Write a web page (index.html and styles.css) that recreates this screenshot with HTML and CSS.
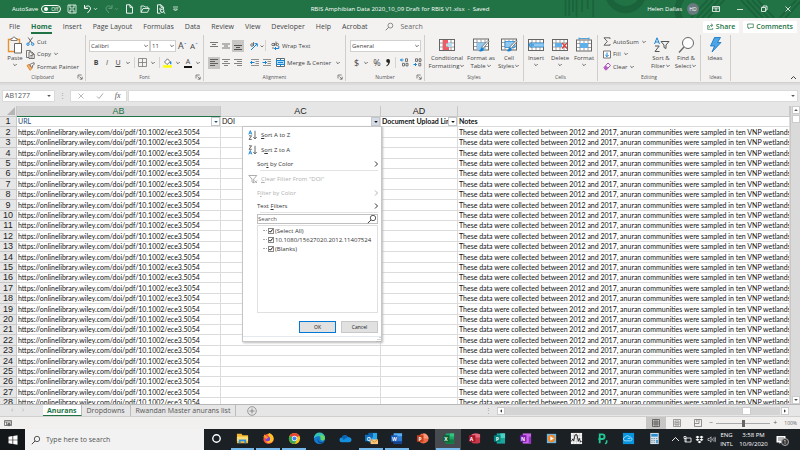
FILE: index.html
```html
<!DOCTYPE html>
<html lang="en">
<head>
<meta charset="utf-8">
<title>RBIS Amphibian Data - Excel</title>
<link rel="stylesheet" href="styles.css">
</head>
<body>
<svg class="defs" aria-hidden="true">
  <symbol id="chev" viewBox="0 0 6 6"><path d="M1.3 2l1.7 1.7L4.7 2" fill="none" stroke="currentColor" stroke-width=".8"/></symbol>
  <symbol id="tri" viewBox="0 0 6 6"><path d="M1.2 2h3.6L3 4z" fill="currentColor"/></symbol>
  <symbol id="launch" viewBox="0 0 6 6"><path d="M1 4.5V1h3.7M2.5 2.5l2.5 2.5M5.2 2.7v2.5H2.7" fill="none" stroke="#555" stroke-width=".7"/></symbol>
  <symbol id="lens" viewBox="0 0 10 10"><path d="M4.1 5.9L.8 9.2" stroke="currentColor" stroke-width=".9"/><circle cx="6" cy="4" r="2.7" fill="none" stroke="currentColor" stroke-width=".8"/></symbol>
  <symbol id="grid" viewBox="0 0 16 14"><rect x=".5" y="1.5" width="15" height="11" fill="#fff" stroke="#666"/><path d="M1 5h14M1 9h14M4 2v10M8 2v10M12 2v10" stroke="#777" stroke-width=".7"/></symbol>
  <symbol id="az" viewBox="0 0 10 10"><path d="M.8 4.5L2.3.6l1.5 3.9M1.3 3.2h2" stroke="#1684d4" fill="none" stroke-width=".9"/><path d="M1 5.8h2.6L1 9.4h2.8M7 .8v8M5.3 7L7 8.9 8.7 7" stroke="#444" fill="none" stroke-width=".8"/></symbol>
  <symbol id="za" viewBox="0 0 10 10"><path d="M.8 9.4L2.3 5.5l1.5 3.9M1.3 8.1h2" stroke="#1684d4" fill="none" stroke-width=".9"/><path d="M1 .8h2.6L1 4.3h2.8M7 .8v8M5.3 7L7 8.9 8.7 7" stroke="#444" fill="none" stroke-width=".8"/></symbol>
</svg>

<header class="titlebar">
  <svg class="pattern" viewBox="0 0 260 18" preserveAspectRatio="none" aria-hidden="true"><g stroke="#1b633b" fill="none"><path stroke-width="2" d="M6 0v16M10 0v16M14 0v12M18 0v17M24 0v12M30 0v9M36 0v17"/><path stroke-width="7" d="M52-4a20 20 0 0 0 38 0M132 22a18 18 0 0 1 0-24"/><path stroke-width="2" d="M142 18l18-18M148 18l18-18M154 18l18-18M160 18l18-18M196 0l18 18M202 0l18 18M208 0l18 18M214 0l18 18M238 18l18-18M244 18l18-18"/></g></svg>
  <div class="quick">
    <span>AutoSave</span>
    <button class="toggle" aria-label="AutoSave off"><i></i>Off</button>
    <button aria-label="Save"><svg width="10" height="10" viewBox="0 0 10 10"><path d="M1 1h8v8H2L1 8zM3 1v3h4V1M3 9V6h4v3" fill="none" stroke="#fff" stroke-width=".8"/></svg></button>
    <button aria-label="Undo"><svg width="15" height="10" viewBox="0 0 15 10"><path d="M1.5 1v3.4H5M1.7 4.2C4-.1 9 2.5 7 6L4.5 9" fill="none" stroke="#fff"/><path d="M11 4.2l1.5 1.5L14 4.2" fill="none" stroke="#fff" stroke-width=".8"/></svg></button>
    <button class="faded" aria-label="Redo"><svg width="15" height="10" viewBox="0 0 15 10"><path d="M8 1v3.4H4.5M7.8 4.2C5.5-.1.5 2.5 2.5 6L5 9" fill="none" stroke="#fff"/><path d="M11 4.2l1.5 1.5L14 4.2" fill="none" stroke="#fff" stroke-width=".8"/></svg></button>
    <button aria-label="New"><svg width="9" height="10" viewBox="0 0 9 10"><path d="M1.5.8H5L7.5 3.3V9.200h-6zM5 .8v2.500h2.500" fill="none" stroke="#fff" stroke-width=".9"/></svg></button>
    <button aria-label="Open"><svg width="10" height="10" viewBox="0 0 10 10"><path d="M1 8.300V2h3l1 1h3v1.500M1 8.300h6.500L9.300 4.500H3z" fill="none" stroke="#fff" stroke-width=".8"/></svg></button>
    <button aria-label="Preview"><svg width="10" height="10" viewBox="0 0 10 10"><path d="M4.500 9.200h-3V.8H5L7.500 3.300V5M5 .8v2.500h2.500" fill="none" stroke="#fff" stroke-width=".9"/><circle cx="6.200" cy="6.700" r="1.700" fill="none" stroke="#fff"/><path d="M7.500 8l1.800 1.700M3 5h2" stroke="#fff"/></svg></button>
    <button aria-label="Customize"><svg width="7" height="8" viewBox="0 0 7 8"><path d="M1 2h5M1.500 4l2 2 2-2z" fill="none" stroke="#fff" stroke-width=".7"/></svg></button>
  </div>
  <div class="doc">RBIS Amphibian Data 2020_10_09 Draft for RBIS V1.xlsx&nbsp; -&nbsp; Saved</div>
  <div class="account">
    <span>Helen Dallas</span><span class="avatar">HD</span>
    <button aria-label="Ribbon options"><svg width="8" height="8" viewBox="0 0 8 8"><path d="M.5 1.500h7v5h-7zM.5 3h7M4 6V3.500M3 4.500l1-1 1 1" fill="none" stroke="#fff" stroke-width=".8"/></svg></button>
    <button aria-label="Minimize"><svg width="8" height="8" viewBox="0 0 8 8"><path d="M1 4.500h6" stroke="#fff" stroke-width=".8"/></svg></button>
    <button aria-label="Restore"><svg width="8" height="8" viewBox="0 0 8 8"><path d="M1.500 2.500h4v4h-4zM3 2.500V1h4v4H5.500" fill="none" stroke="#fff" stroke-width=".8"/></svg></button>
    <button aria-label="Close"><svg width="8" height="8" viewBox="0 0 8 8"><path d="M1.500 1.500l5 5M6.500 1.500l-5 5" stroke="#fff" stroke-width=".8"/></svg></button>
  </div>
</header>

<nav class="tabs">
  <button>File</button><button class="active">Home</button><button>Insert</button><button>Page Layout</button><button>Formulas</button><button>Data</button><button>Review</button><button>View</button><button>Developer</button><button>Help</button><button>Acrobat</button>
  <button class="find"><svg width="9" height="9"><use href="#lens"/></svg>Search</button>
  <span class="grow"></span>
  <button class="pill"><svg width="7" height="7" viewBox="0 0 7 7"><path d="M2 2.500H.7v3.800h5V5M2 5c0-2 1.500-2.700 3-2.700M4 .8l2 1.500-2 1.500" fill="none" stroke="#217346" stroke-width=".7"/></svg>Share</button>
  <button class="pill"><svg width="7" height="7" viewBox="0 0 7 7"><path d="M.7 1h5.600v3.600H3L1.700 6V4.600h-1z" fill="none" stroke="#217346" stroke-width=".7"/></svg>Comments</button>
</nav>

<section class="ribbon">
  <div class="group clipboard">
    <div class="body">
      <button class="big"><svg width="16" height="18" viewBox="0 0 16 18"><path d="M8 15.500H1.500V3.500h11V7" fill="none" stroke="#e8912d" stroke-width="1.400"/><path d="M4 4.500v-2h1.500a1.500 1.500 0 0 1 3 0H10v2z" fill="#fff" stroke="#666" stroke-width=".8"/><path d="M7.500 7.500h7v9.500h-7z" fill="#fff" stroke="#666"/></svg>Paste<svg width="6" height="6"><use href="#chev"/></svg></button>
      <div class="stack">
        <button><svg width="9" height="9" viewBox="0 0 9 9"><path d="M2.200.5L6 6M6.500.5L2.800 6" stroke="#555" stroke-width=".9"/><circle cx="2" cy="7.200" r="1.200" fill="none" stroke="#1684d4"/><circle cx="6.700" cy="7.200" r="1.200" fill="none" stroke="#1684d4"/></svg>Cut</button>
        <button><svg width="9" height="9" viewBox="0 0 9 9"><path d="M3 7.500H.5v-7h3.800V2M3 2h3l2.300 2.300v4.200H3zM6 2v2.300h2.300M4.300 5.500h2.500M4.300 7h2.500" fill="none" stroke="#555" stroke-width=".8"/></svg>Copy <svg width="6" height="6"><use href="#chev"/></svg></button>
        <button><svg width="9" height="9" viewBox="0 0 9 9"><path d="M1 3.500l3 4.800 2.200-2-3.200-4z" fill="#f6b26b" stroke="#e07b18" stroke-width=".8"/><path d="M3.700 2.500L8 .6l.3 1.700-2 1.300.5 1.500-1 .6z" fill="#fff" stroke="#555" stroke-width=".8"/></svg>Format Painter</button>
      </div>
    </div>
    <h2>Clipboard</h2><svg class="launcher" width="6" height="6"><use href="#launch"/></svg>
  </div>

  <div class="group font">
    <div class="body lines">
      <div class="line"><select class="face" aria-label="Font"><option>Calibri</option></select><select class="size" aria-label="Font size"><option>11</option></select><button class="let a1">A<sup>ˆ</sup></button><button class="let a2">A<sup>ˇ</sup></button></div>
      <div class="line fmt"><button><b>B</b></button><button><em>I</em></button><button><u>U</u></button><svg width="6" height="6"><use href="#chev"/></svg><i class="bar"></i>
        <button aria-label="Borders"><svg width="9" height="9" viewBox="0 0 9 9"><path d="M.5.5h8v8h-8zM4.500.5v8M.5 4.500h8" fill="none" stroke="#777" stroke-width=".8"/></svg></button><svg width="6" height="6"><use href="#chev"/></svg><i class="bar"></i>
        <button aria-label="Fill color"><svg width="9" height="10" viewBox="0 0 9 10"><path d="M1.500 4L4.500.8l2.700 3L4 6.500z" fill="#fff" stroke="#555" stroke-width=".8"/><path d="M7.700 3.500v2.800" stroke="#1684d4" stroke-width="1.300"/><path d="M0 7.200h9v2.500H0z" fill="#ffff00"/></svg></button><svg width="6" height="6"><use href="#chev"/></svg>
        <button class="ink">A</button><svg width="6" height="6"><use href="#chev"/></svg></div>
    </div>
    <h2>Font</h2><svg class="launcher" width="6" height="6"><use href="#launch"/></svg>
  </div>

  <div class="group align">
    <div class="body lines">
      <div class="line"><button aria-label="Top"><svg width="12" height="12" viewBox="0 0 12 12"><path d="M2 2.500h8M4 4.500h4M2 6.500h8" stroke="#666" stroke-width=".9"/></svg></button><button aria-label="Middle"><svg width="12" height="12" viewBox="0 0 12 12"><path d="M2 4h8M4 6h4M2 8h8" stroke="#666" stroke-width=".9"/></svg></button><button class="on" aria-label="Bottom"><svg width="12" height="12" viewBox="0 0 12 12"><path d="M2 5.500h8M4 7.500h4M2 9.500h8" stroke="#444" stroke-width=".9"/></svg></button><i class="gap"></i>
        <button aria-label="Orientation"><svg width="16" height="10" viewBox="0 0 16 10"><path d="M2 9l6-6M5.500 2.700h2.800v2.800" stroke="#1684d4" fill="none"/><circle cx="3" cy="4" r="1.300" fill="none" stroke="#555" stroke-width=".8"/><path d="M4.500 1v4" stroke="#555" stroke-width=".8"/><path d="M11.500 4.500L13 6l1.500-1.500" fill="none" stroke="#555" stroke-width=".8"/></svg></button><i class="bar"></i>
        <button class="wide"><svg width="9" height="10" viewBox="0 0 9 10"><circle cx="2" cy="3.500" r="1.200" fill="none" stroke="#555" stroke-width=".8"/><path d="M3.500 2v3M5 .5v4.300M1 7h2" fill="none" stroke="#555" stroke-width=".8"/><circle cx="6.300" cy="3.500" r="1.200" fill="none" stroke="#555" stroke-width=".8"/><path d="M7.800 5v2.500H3.500M5 6L3.500 7.500 5 9" fill="none" stroke="#1684d4"/></svg>Wrap Text</button></div>
      <div class="line"><button class="on" aria-label="Left"><svg width="12" height="12" viewBox="0 0 12 12"><path d="M2 2.500h8M2 4.500h5M2 6.500h8M2 8.500h5" stroke="#555" stroke-width=".9"/></svg></button><button aria-label="Center"><svg width="12" height="12" viewBox="0 0 12 12"><path d="M2 2.500h8M4 4.500h4M2 6.500h8M4 8.500h4" stroke="#777" stroke-width=".9"/></svg></button><button aria-label="Right"><svg width="12" height="12" viewBox="0 0 12 12"><path d="M2 2.500h8M5 4.500h5M2 6.500h8M5 8.500h5" stroke="#777" stroke-width=".9"/></svg></button><i class="gap"></i>
        <button aria-label="Decrease indent"><svg width="12" height="10" viewBox="0 0 12 10"><path d="M2 1.500h8M6.500 3.500H10M6.500 5.500H10M2 7.500h8" stroke="#777" stroke-width=".8"/><path d="M5.500 4.500h-4M3 3L1.500 4.500 3 6" fill="none" stroke="#1684d4"/></svg></button><button aria-label="Increase indent"><svg width="12" height="10" viewBox="0 0 12 10"><path d="M2 1.500h8M6.500 3.500H10M6.500 5.500H10M2 7.500h8" stroke="#777" stroke-width=".8"/><path d="M1.500 4.500h4M4 3l1.500 1.500L4 6" fill="none" stroke="#1684d4"/></svg></button>
        <button class="wide merge"><svg width="9" height="9" viewBox="0 0 9 9"><path d="M.5.5h8v8h-8z" fill="#fff" stroke="#666"/><path d="M.5 2.500h8v4h-8z" fill="#b5dbf5" stroke="#1684d4"/><path d="M2 4.500h5M4.500.5v2M4.500 6.500v2" stroke="#1684d4"/></svg>Merge &amp; Center <svg width="6" height="6"><use href="#chev"/></svg></button></div>
    </div>
    <h2>Alignment</h2><svg class="launcher" width="6" height="6"><use href="#launch"/></svg>
  </div>

  <div class="group number">
    <div class="body lines">
      <div class="line"><select class="numfmt" aria-label="Number format"><option>General</option></select></div>
      <div class="line sym"><button>$</button><svg width="6" height="6"><use href="#chev"/></svg><button>%</button><button aria-label="Comma style"><svg width="6" height="9" viewBox="0 0 6 9"><path d="M1.300 7.500c1.500-.7 2-1.700 2-2.700A1.900 1.900 0 1 1 5 2.900C5 5.500 3.600 7.500 1.600 8.200z" fill="#222"/></svg></button><i class="bar"></i>
        <button aria-label="Increase decimal"><svg width="9" height="9" viewBox="0 0 9 9"><path d="M3.500 2H.5M2 .5L.5 2 2 3.500" fill="none" stroke="#1684d4"/><path d="M5.500.8h2v2.600h-2zM2.500 5.300h2v2.600h-2zM6 5.300h2v2.600H6z" fill="none" stroke="#555" stroke-width=".8"/></svg></button>
        <button aria-label="Decrease decimal"><svg width="9" height="9" viewBox="0 0 9 9"><path d="M.5 6.500h3M2 5l1.500 1.500L2 8" fill="none" stroke="#1684d4"/><path d="M2.500.8h2v2.600h-2zM6 .8h2v2.600H6zM5.800 5.300h2v2.600h-2z" fill="none" stroke="#555" stroke-width=".8"/></svg></button></div>
    </div>
    <h2>Number</h2><svg class="launcher" width="6" height="6"><use href="#launch"/></svg>
  </div>

  <div class="group styles">
    <div class="body">
      <button class="big w38"><svg width="16" height="14" viewBox="0 0 16 14"><use href="#grid"/><path d="M4 2h5v3H4zM4 5h3v4H4zM4 9h6v3H4z" fill="#f15b64"/><path d="M9 5h4v4H9z" fill="#b5dbf5"/></svg>Conditional<span>Formatting<svg width="6" height="6"><use href="#chev"/></svg></span></button>
      <button class="big w30"><svg width="17" height="15" viewBox="0 0 17 15"><use href="#grid" width="16" height="14"/><path d="M4 5h8v7H4z" fill="#8fc8f0"/><path d="M16 4l-6 7-1.500-1.200L15 3z" fill="#fff" stroke="#555" stroke-width=".7"/><path d="M9.500 10c-2 0-1.500 2.500-4 3.500 3 1 5.500 0 5.300-2.300z" fill="#1684d4"/></svg>Format as<span>Table<svg width="6" height="6"><use href="#chev"/></svg></span></button>
      <button class="big w26"><svg width="17" height="15" viewBox="0 0 17 15"><use href="#grid" width="16" height="14"/><path d="M4 4h10v6H4z" fill="#8fc8f0" stroke="#1684d4" stroke-width=".7"/><path d="M16 4l-6 7-1.500-1.200L15 3z" fill="#fff" stroke="#555" stroke-width=".7"/><path d="M9.500 10c-2 0-1.500 2.500-4 3.500 3 1 5.500 0 5.300-2.300z" fill="#1684d4"/></svg>Cell<span>Styles<svg width="6" height="6"><use href="#chev"/></svg></span></button>
    </div>
    <h2>Styles</h2>
  </div>

  <div class="group cells">
    <div class="body">
      <button class="big w22"><svg width="16" height="14" viewBox="0 0 16 14"><use href="#grid"/><path d="M3 5h13v4H3z" fill="#8fc8f0" stroke="#1684d4" stroke-width=".6"/><path d="M6 7H.8M3 4.500L.7 7 3 9.500" fill="none" stroke="#1684d4"/></svg>Insert<svg width="6" height="6"><use href="#chev"/></svg></button>
      <button class="big w22"><svg width="16" height="14" viewBox="0 0 16 14"><use href="#grid"/><path d="M3 5h7v4H3z" fill="#5eb0ea"/><path d="M10 5l5 5.500M15 5l-5 5.500" stroke="#e03c3c" stroke-width="1.200"/></svg>Delete<svg width="6" height="6"><use href="#chev"/></svg></button>
      <button class="big w22"><svg width="16" height="15" viewBox="0 0 16 15"><use href="#grid" y="1" width="16" height="14"/><path d="M4 5.500h8v5H4z" fill="#5eb0ea"/><path d="M3 1h10M3 0v2M13 0v2" stroke="#1684d4" stroke-width=".7"/></svg>Format<svg width="6" height="6"><use href="#chev"/></svg></button>
    </div>
    <h2>Cells</h2>
  </div>

  <div class="group editing">
    <div class="body">
      <div class="stack">
        <button><svg width="8" height="9" viewBox="0 0 8 9"><path d="M7 2V.8H1L4.300 4.500 1 8.200h6V7" fill="none" stroke="#555" stroke-width=".9"/></svg>AutoSum <svg width="6" height="6"><use href="#chev"/></svg></button>
        <button><svg width="8" height="9" viewBox="0 0 8 9"><path d="M.5 1h7v7h-7z" fill="#fff" stroke="#555" stroke-width=".8"/><path d="M4 2.500v4M2.300 5L4 6.700 5.700 5" fill="none" stroke="#1684d4"/></svg>Fill<svg width="6" height="6"><use href="#chev"/></svg></button>
        <button><svg width="8" height="9" viewBox="0 0 8 9"><path d="M1 5.500L5 1l2.500 2.300-4 4.500H2.300z" fill="#fff" stroke="#a347b5"/><path d="M1 5.500l1.800-2 2.500 2.300-1.800 2H2.300z" fill="#b75cc8"/></svg>Clear<svg width="6" height="6"><use href="#chev"/></svg></button>
      </div>
      <button class="big w26"><svg width="17" height="16" viewBox="0 0 17 16"><path d="M1.500 7L4 .8 6.500 7M2.400 5h3.200" fill="none" stroke="#1684d4"/><path d="M2 9h4.200L2 14.500h4.500M8 4.500h8l-3 3.500v3.500l-2-1V8z" fill="none" stroke="#555"/></svg>Sort &amp;<span>Filter<svg width="6" height="6"><use href="#chev"/></svg></span></button>
      <button class="big w22"><svg width="17" height="17" viewBox="0 0 17 17"><circle cx="10" cy="6.500" r="5.500" fill="#fff" stroke="#666"/><path d="M6 10.500L1 16" stroke="#666" stroke-width="1.300"/></svg>Find &amp;<span>Select<svg width="6" height="6"><use href="#chev"/></svg></span></button>
    </div>
    <h2>Editing</h2>
  </div>

  <div class="group ideas">
    <div class="body"><button class="big w26"><svg width="13" height="17" viewBox="0 0 13 17"><path d="M5.500 1h6l-3 5H12L3 15.500l2.500-6H1.500z" fill="#4ba6e8" stroke="#1270bd" stroke-width=".8"/></svg>Ideas</button></div>
    <h2>Ideas</h2>
  </div>
  <span class="grow"></span>
  <button class="collapse" aria-label="Collapse ribbon"><svg width="7" height="6" viewBox="0 0 7 6"><path d="M1 4l2.500-2.500L6 4" fill="none" stroke="#444"/></svg></button>
</section>

<section class="formula">
  <div class="namebox"><input value="AB1277" aria-label="Name box"><svg width="6" height="6"><use href="#tri"/></svg></div>
  <span class="dots">⋮</span>
  <div class="fx"><svg width="8" height="8" viewBox="0 0 8 8"><path d="M1.500 1.500l5 5M6.500 1.500l-5 5" stroke="#aaa" stroke-width=".8"/></svg><svg width="8" height="8" viewBox="0 0 8 8"><path d="M1 4.500l2 2 4-5" fill="none" stroke="#aaa"/></svg><em>fx</em></div>
  <div class="entry"><input aria-label="Formula bar"><svg width="6" height="6"><use href="#tri"/></svg></div>
</section>

<main class="sheet">
  <div class="viewport">
    <table>
      <colgroup><col class="c0"><col class="c1"><col class="c2"><col class="c3"><col></colgroup>
      <thead>
        <tr class="letters"><th><svg width="8" height="8" viewBox="0 0 8 8"><path d="M8 0v8H0z" fill="#b5b5b5"/></svg></th><th class="sel">AB</th><th>AC</th><th>AD</th><th></th></tr>
      </thead>
      <tbody id="rows">
        <tr><th>1</th><td class="url"><div>URL<button aria-label="Filter URL"><svg width="6" height="6"><use href="#tri"/></svg></button></div></td><td><div>DOI<button class="open" aria-label="Filter DOI"><svg width="6" height="6"><use href="#tri"/></svg></button></div></td><td><div><b>Document Upload Link</b><button aria-label="Filter links"><svg width="6" height="6"><use href="#tri"/></svg></button></div></td><td><b>Notes</b></td></tr>
      </tbody>
    </table>
  </div>
  <div class="vscroll"><i class="arrow"><svg width="6" height="6" viewBox="0 0 6 6"><path d="M1.200 4h3.600L3 2z" fill="#555"/></svg></i><i class="thumb"></i><span class="grow"></span><i class="arrow"><svg width="6" height="6"><use href="#tri"/></svg></i></div>

  <div class="menu" role="menu">
    <button class="mi tall"><svg width="10" height="10"><use href="#az"/></svg><span><u>S</u>ort A to Z</span></button>
    <button class="mi tall"><svg width="10" height="10"><use href="#za"/></svg><span>S<u>o</u>rt Z to A</span></button>
    <button class="mi plain"><span>Sor<u>t</u> by Color</span><svg width="6" height="6" viewBox="0 0 6 6"><path d="M2 .5L4.500 3 2 5.500" fill="none" stroke="currentColor"/></svg></button>
    <hr>
    <button class="mi tall" disabled><svg width="10" height="10" viewBox="0 0 10 10"><path d="M.8 1.500h8L5.700 5v4L4 8V5zM6.500 6.500l2.500 2.500M9 6.500L6.500 9" fill="none" stroke="#999" stroke-width=".8"/></svg><span><u>C</u>lear Filter From "DOI"</span></button>
    <button class="mi plain" disabled><span>F<u>i</u>lter by Color</span><svg width="6" height="6" viewBox="0 0 6 6"><path d="M2 .5L4.500 3 2 5.500" fill="none" stroke="currentColor"/></svg></button>
    <button class="mi plain"><span>Text <u>F</u>ilters</span><svg width="6" height="6" viewBox="0 0 6 6"><path d="M2 .5L4.500 3 2 5.500" fill="none" stroke="currentColor"/></svg></button>
    <hr>
    <div class="msearch"><input placeholder="Search" aria-label="Search values"><svg width="10" height="10"><use href="#lens"/></svg></div>
    <div class="values">
      <label><input type="checkbox" checked>(Select All)</label>
      <label><input type="checkbox" checked>10.1080/15627020.2012.11407524</label>
      <label><input type="checkbox" checked>(Blanks)</label>
    </div>
    <div class="actions"><button class="ok">OK</button><button>Cancel</button></div>
    <div class="grip"><svg width="5" height="5" viewBox="0 0 5 5"><path d="M4 0v1M2 2v1M4 2v1M0 4v1M2 4v1M4 4v1" stroke="#aaa"/></svg></div>
  </div>
</main>

<footer class="sheets">
  <span class="nav"><i>‹</i><i>›</i></span>
  <button class="active">Anurans</button><button>Dropdowns</button><button>Rwandan Master anurans list</button>
  <button class="add" aria-label="New sheet"><svg width="10" height="10" viewBox="0 0 10 10"><circle cx="5" cy="5" r="4.300" fill="none" stroke="#777" stroke-width=".7"/><path d="M5 2.500v5M2.500 5h5" stroke="#777" stroke-width=".8"/></svg></button>
  <span class="grow"></span>
  <div class="hscroll"><span class="dots">⋮</span><i class="arrow"><svg width="6" height="6" viewBox="0 0 6 6"><path d="M4 1.200v3.600L2 3z" fill="#444"/></svg></i><span class="track"><i class="thumb"></i></span><i class="arrow"><svg width="6" height="6" viewBox="0 0 6 6"><path d="M2 1.200v3.600L4 3z" fill="#444"/></svg></i></div>
</footer>

<div class="status">
  <svg width="8" height="7" viewBox="0 0 8 7"><path d="M.5.500h7v5h-7zM.5 2h7M2.500 2v3.500" fill="none" stroke="#666" stroke-width=".8"/><circle cx="5" cy="4.500" r="1.700" fill="#666"/></svg>
  <span class="grow"></span>
  <button class="on" aria-label="Normal view"><svg width="8" height="8" viewBox="0 0 8 8"><path d="M.5.500h7v7h-7zM.5 3h7M.5 5h7M3 .5v7M5 .5v7" fill="none" stroke="#555" stroke-width=".8"/></svg></button>
  <button aria-label="Page layout"><svg width="8" height="8" viewBox="0 0 8 8"><path d="M.5.500h7v7h-7zM2 2h4v4H2zM2.500 3.500h3M2.500 5h3" fill="none" stroke="#777" stroke-width=".7"/></svg></button>
  <button aria-label="Page break"><svg width="8" height="8" viewBox="0 0 8 8"><path d="M.5.500h7v7h-7zM.5 4.500h4.500V.5M2.800.5v2.500" fill="none" stroke="#777" stroke-width=".8"/></svg></button>
  <span>−</span><input type="range" aria-label="Zoom" value="50"><span>+</span><span class="pct">100%</span>
</div>

<footer class="taskbar">
  <button class="start" aria-label="Start"><svg width="10" height="10" viewBox="0 0 10 10"><path d="M.5 1.700L4.500 1v3.700h-4zM5.200.9L9.500.2v4.500H5.200zM.5 5.300h4V9l-4-.7zM5.200 5.300h4.300v4.500l-4.300-.7z" fill="#fff"/></svg></button>
  <label class="wsearch"><svg width="10" height="10"><use href="#lens"/></svg><input placeholder="Type here to search"></label>
  <div class="apps">
    <button aria-label="Cortana"><svg viewBox="0 0 14 14"><circle cx="7" cy="7" r="4" fill="none" stroke="#fff" stroke-width="1.500"/></svg></button>
    <button class="run" aria-label="Explorer"><svg viewBox="0 0 14 14"><path d="M1 2h5l1 1.500h6V12H1z" fill="#f5b82e"/><path d="M1 5h12v5H1z" fill="#ffdc73"/><path d="M3 12V8h8v4H9v-2H5v2z" fill="#2e8ee0"/></svg></button>
    <button class="run" aria-label="Firefox"><svg viewBox="0 0 14 14"><circle cx="7" cy="7.500" r="5.500" fill="#ff4f3b"/><path d="M6 3l2-2c4 2 5.500 5 4 8.500-2 3-6 3-8 1 5 0 6-4 2-7.500z" fill="#ffc229"/><circle cx="6.300" cy="7.500" r="2.500" fill="#7a43d6"/><path d="M1.500 5L3 2.500 5 5l2 .5-2 2z" fill="#ff9a2a"/></svg></button>
    <button class="run" aria-label="Chrome"><svg viewBox="0 0 14 14"><circle cx="7" cy="7" r="6" fill="#fbc116"/><path d="M7 7L1.800 4A6 6 0 0 1 12.200 4z" fill="#ea4335"/><path d="M7 7L1.800 4A6 6 0 0 0 7 13l2.600-4.500z" fill="#34a853"/><circle cx="7" cy="7" r="2.900" fill="#fff"/><circle cx="7" cy="7" r="2.200" fill="#4285f4"/></svg></button>
    <button aria-label="Edge"><svg viewBox="0 0 14 14"><circle cx="7" cy="7" r="6" fill="#1479cc"/><path d="M1 7a6 6 0 0 1 12-1c.5 3-4 4-5 2 1-2-1-4-3-3.500S1.500 6 1 7z" fill="#35c1b5"/><path d="M8 3c3 0 5 2 5 4s-3 2.500-4.500 1.500z" fill="#63d663"/><path d="M6 6c-1.500 3 1 6 5.500 4.500L9 12.500C5 12 4 8 6 6z" fill="#0b4a92"/></svg></button>
    <button aria-label="OneDrive"><svg viewBox="0 0 14 14"><path d="M3 11a2.500 2.500 0 0 1 0-5c1-3 5-3.500 6.500-.7 2.500 0 4 1.300 4 3S12.500 11 11 11z" fill="#1490df"/><path d="M3 6c1-3 5-3.500 6.500-.7L5 8.500z" fill="#0a64b5"/></svg></button>
    <button class="run" aria-label="Outlook"><svg viewBox="0 0 14 14"><path d="M4 1h9v10H4z" fill="#28a8ea"/><path d="M4 1h4.500v5H4z" fill="#0f5fae"/><path d="M0 3h7v7H0z" fill="#0f6cbd"/><path d="M6 8h8v5H6z" fill="#f9c77a"/><path d="M6 8l4 3 4-3" fill="none" stroke="#c8751a" stroke-width=".7"/></svg><b>O</b></button>
    <button class="run" aria-label="Word"><svg viewBox="0 0 14 14"><path d="M4 1.500h9v11H4z" fill="#2b7cd3"/><path d="M4 1.500h9v3H4z" fill="#5ab0ef"/><path d="M4 10h9v2.500H4z" fill="#153f88"/><path d="M1 3.500h7v7H1z" fill="#185abd"/></svg><b>W</b></button>
    <button aria-label="PowerPoint"><svg viewBox="0 0 14 14"><circle cx="8" cy="7" r="5.500" fill="#ed6c47"/><path d="M8 1.500A5.500 5.500 0 0 1 13.500 7H8z" fill="#ff9b78"/><path d="M1 3.500h7v7H1z" fill="#c43e1c"/></svg><b>P</b></button>
    <button class="run current" aria-label="Excel"><svg viewBox="0 0 14 14"><path d="M4 1.500h9v11H4z" fill="#21a366"/><path d="M8.500 1.500H13V5H8.500z" fill="#33c481"/><path d="M4 8h9v4.500H4z" fill="#107c41"/><path d="M1 3.500h7v7H1z" fill="#0c6337"/></svg><b>X</b></button>
    <button aria-label="Access"><svg viewBox="0 0 14 14"><path d="M4 2.500q4.500-2 9 0v9q-4.500 2-9 0z" fill="#c8384b"/><path d="M4 2.500q4.500-2 9 0V6H4z" fill="#e5697a"/><path d="M1 3.500h7v7H1z" fill="#a4172b"/></svg><b>A</b></button>
    <button aria-label="Publisher"><svg viewBox="0 0 14 14"><path d="M4 1.500h9v11H4z" fill="#1aa69c"/><path d="M8 1.500h5v5H8z" fill="#4cd0c4"/><path d="M1 3.500h7v7H1z" fill="#037e77"/></svg><b>P</b></button>
    <button aria-label="OneNote"><svg viewBox="0 0 14 14"><path d="M4 1.500h9v11H4z" fill="#ca64ea"/><path d="M10.500 5H13v7.500h-2.500z" fill="#9332bf"/><path d="M1 3.500h7v7H1z" fill="#7719aa"/></svg><b>N</b></button>
    <button aria-label="Media player"><svg viewBox="0 0 14 14"><path d="M2 2h10v10H2z" fill="#70b8df"/><circle cx="7" cy="7" r="4" fill="#f18825"/><path d="M5.700 4.700L9.500 7 5.700 9.300z" fill="#fff"/></svg></button>
    <button aria-label="Signal"><svg viewBox="0 0 14 14"><path d="M1 1h12v12H1z" fill="#f5f5f5"/><path d="M1 4h12M1 7h12M1 10h12M4 1v12M7 1v12M10 1v12" stroke="#bbb" stroke-width=".5"/><path d="M1.500 10L3 7.500l1 2L5.500 3h2L9 10l1-3 1.500 4 1-1" fill="none" stroke="#222"/></svg></button>
    <button aria-label="Notes"><svg viewBox="0 0 14 14"><path d="M4 12V2.500h2.700a2.500 2.500 0 0 1 0 5H2.500" fill="none" stroke="#20c997" stroke-width="2"/><path d="M11.500 9v2L10 13" stroke="#20c997" stroke-width="1.700" fill="none"/></svg></button>
    <button aria-label="Cloud"><svg viewBox="0 0 14 14"><path d="M1 1h12v12H1z" fill="#0795df"/><path d="M3.500 9.500a2 2 0 0 1 0-4c1-2 4-2 4.500 0 3-.5 4 4 1 4zM6 7h3" fill="none" stroke="#a9e2ff" stroke-width=".9"/></svg></button>
    <button aria-label="Calculator"><svg viewBox="0 0 14 14"><path d="M2.500 1h9v12h-9z" fill="#d9e6ef"/><path d="M3.500 2h7v3h-7z" fill="#298bd0"/><path d="M3.500 7h7M3.500 9h7M3.500 11h7" stroke="#6a8aa0" stroke-dasharray="1.500 1"/><path d="M9 8.500h1.500V12H9z" fill="#298bd0"/></svg></button>
  </div>
  <div class="tray">
    <svg width="9" height="9" viewBox="0 0 9 9"><path d="M1 6l3.500-3.500L8 6" fill="none" stroke="#fff" stroke-width=".9"/></svg>
    <svg width="9" height="9" viewBox="0 0 9 9"><path d="M3 3h5v4H3zM1 1.500v2h2v-2zM2 3.500V7h1" fill="none" stroke="#fff" stroke-width=".8"/></svg>
    <svg width="9" height="9" viewBox="0 0 9 9"><path d="M2.500.8l2 1.300-2 1.300-2-1.300zM6.500.8l2 1.300-2 1.300-2-1.300zM2.500 3.400l2 1.300-2 1.300-2-1.300zM6.500 3.400l2 1.300-2 1.300-2-1.300zM4.500 5.800l2 1.200-2 1.300-2-1.300z" fill="#fff"/></svg>
    <svg width="9" height="9" viewBox="0 0 9 9"><path d="M1 3.500h1.300L4 1.800v5.400L2.300 5.500H1zM5.300 3.500v2M6.700 2.500q1 2 0 4M8 1.800q1.200 2.700 0 5.400" fill="none" stroke="#ddd" stroke-width=".7"/></svg>
    <span class="lang">ENG<br>INTL</span><span class="clock">3:58 PM<br>10/9/2020</span>
    <button class="notif" aria-label="Notifications"><svg width="10" height="10" viewBox="0 0 10 10"><path d="M.5 1h9v6.500H5L3.500 9V7.500h-3z" fill="#fff"/><path d="M2 3h6M2 5h6" stroke="#333" stroke-width=".7"/></svg><i>1</i></button>
  </div>
</footer>
<script src="rows.js"></script>
</body>
</html>
```
FILE: rows.js
```js
const url = "https://onlinelibrary.wiley.com/doi/pdf/10.1002/ece3.5054";
const note = "These data were collected between 2012 and 2017, anuran communities were sampled in ten VNP wetlands located";
const body = document.getElementById("rows");
for (let n = 2; n <= 28; n++) {
  const row = body.insertRow();
  const head = document.createElement("th");
  head.textContent = n;
  row.append(head);
  for (const text of [url, "", "", note]) row.insertCell().textContent = text;
}
```
FILE: styles.css
```css
* { box-sizing: border-box; }
body { margin: 0; height: 100vh; display: flex; flex-direction: column; overflow: hidden; background: #e6e6e6; color: #444; font: 7px/10px "Open Sans", "Noto Sans", sans-serif; }
button, input, select { font: inherit; color: inherit; border: 0; background: none; padding: 0; margin: 0; min-width: 0; outline: 0; }
button { display: inline-flex; align-items: center; white-space: nowrap; }
i { font-style: normal; }
svg { flex: none; display: block; }
.defs { position: absolute; width: 0; height: 0; }
.grow { flex: 1; }

.titlebar { position: relative; flex: none; height: 18px; display: grid; grid-template-columns: 1fr auto 1fr; align-items: center; background: #217346; color: #fff; font-size: 6px; }
.pattern { position: absolute; right: 0; top: 0; width: 240px; height: 18px; }
.quick { display: flex; align-items: center; gap: 6px; padding-left: 12px; }
.quick > span { margin-right: -3px; }
.toggle { width: 20px; height: 8px; border: 1px solid #fff; border-radius: 4px; font-size: 5px; gap: 3px; padding-left: 2px; line-height: 6px; }
.toggle i { width: 4px; height: 4px; border-radius: 2px; background: #fff; }
.faded { opacity: .3; }
.account { position: relative; display: flex; align-items: center; justify-content: flex-end; gap: 16px; padding-right: 8px; }
.account > span:first-child { margin-right: -11px; }
.avatar { width: 12px; height: 12px; border-radius: 6px; background: #69797e; font-size: 5px; line-height: 12px; text-align: center; margin-right: -3px; }

.tabs { flex: none; height: 17px; display: flex; align-items: center; gap: 11px; padding: 0 3px 0 9px; background: #f3f2f1; }
.tabs button { height: 15px; }
.tabs .active { font-weight: 700; color: #217346; border-bottom: 2px solid #217346; padding-top: 2px; }
.tabs .find { gap: 7px; margin-left: 6px; color: #666; }
.tabs .pill { height: 12px; background: #fff; border-radius: 1px; color: #217346; font-weight: 600; gap: 2px; padding: 0 4px; margin-left: -7px; }

.ribbon { flex: none; height: 48px; display: flex; background: #f3f2f1; border-bottom: 1px solid #d0d0d0; font-size: 6px; line-height: 8px; }
.group { position: relative; height: 46px; display: flex; flex-direction: column; border-right: 1px solid #d0cecc; }
.group h2 { margin: 0; text-align: center; font: 5px/8px "Open Sans", sans-serif; color: #555; }
.body { display: flex; height: 38px; padding-left: 4px; }
.launcher { position: absolute; right: 2px; bottom: 1px; }
.big { flex-direction: column; width: 22px; line-height: 8px; padding-top: 1px; }
.big > svg:first-child { height: 18px; }
.big span { display: flex; align-items: center; }
.w38 { width: 38px; } .w30 { width: 30px; } .w26 { width: 26px; } .w22 { width: 22px; }
.stack { display: flex; flex-direction: column; align-items: flex-start; justify-content: space-between; padding: 1px 0; }
.stack button { gap: 2px; height: 11px; }
.lines { flex-direction: column; gap: 4px; padding-top: 4px; }
.line { display: flex; align-items: center; height: 13px; }
.bar { width: 1px; height: 11px; background: #d5d3d1; }
.gap { width: 5px; }
.on { background: #c8c6c4; }
select { appearance: none; height: 12px; background: #fff url("data:image/svg+xml,%3Csvg xmlns='http://www.w3.org/2000/svg' viewBox='0 0 6 6'%3E%3Cpath d='M1.300 2l1.700 1.700L4.700 2' fill='none' stroke='%23444' stroke-width='.8'/%3E%3C/svg%3E") no-repeat right 0 center / 6px 6px; border: 1px solid #d2d0ce; padding-left: 1px; }
.clipboard { width: 86px; } .font { width: 118px; } .align { width: 142px; } .number { width: 79px; }
.styles { width: 99px; } .cells { width: 74px; } .editing { width: 103px; } .ideas { width: 30px; }
.face { width: 61px; } .size { width: 26px; }
.let { font-size: 9px; width: 12px; padding-left: 2px; }
.let sup { color: #1684d4; font-size: 7px; line-height: 1px; }
.a2 { font-size: 8px; }
.font .body { padding-left: 3px; }
.fmt { gap: 3px; padding-left: 3px; font-size: 7px; }
.fmt button { min-width: 8px; justify-content: center; }
.ink { border-bottom: 2px solid #111; line-height: 8px; }
.align .on, .align .line > button { height: 12px; }
.wide { gap: 2px; padding-left: 5px; }
.merge { padding-left: 3px; }
.merge > svg:last-child { margin-left: 2px; }
.number .body { padding-left: 4px; }
.numfmt { width: 71px; }
.sym { gap: 4px; padding-left: 4px; font-size: 9px; }
.styles .body { padding-left: 3px; gap: 0; }
.cells .body { padding-left: 0; }
.cells .w22 { width: 24px; }
.ideas .body { padding-left: 1px; }
.editing .body { padding-left: 5px; gap: 1px; }
.editing .stack { width: 44px; }
.collapse { align-self: flex-end; padding: 0 3px 1px 0; }

.formula { flex: none; height: 23px; display: flex; align-items: center; padding: 0 2px; background: #e6e6e6; color: #555; border-top: 2px solid #dcdcdc; }
.namebox, .fx, .entry { height: 12px; display: flex; align-items: center; background: #fff; border: 1px solid #dadada; }
.namebox { width: 53px; padding: 0 2px; }
.namebox input, .entry input { flex: 1; }
.dots { width: 15px; text-align: center; color: #999; }
.fx { width: 57px; justify-content: space-around; }
.fx em { font: italic 8px/10px "Liberation Serif", serif; }
.entry { flex: 1; margin-left: 1px; padding-right: 1px; }

.sheet { position: relative; flex: 1; min-height: 0; display: flex; }
.viewport { flex: 1; min-width: 0; overflow: hidden; background: #fff; }
table { width: 100%; table-layout: fixed; border-collapse: separate; border-spacing: 0; color: #111; font-family: Lato, "Open Sans", sans-serif; }
.c0 { width: 17px; } .c1 { width: 204px; } .c2 { width: 160px; } .c3 { width: 77px; }
th, td { height: 10px; padding: 0 0 0 1px; border: 0 solid #dcdcdc; border-width: 0 1px 1px 0; line-height: 9px; overflow: hidden; white-space: nowrap; text-align: left; }
tbody tr:nth-child(5n+2) > *, tbody tr:nth-child(5n+4) > * { height: 11px; }
th { padding: 0; text-align: center; font: 9px/9px "Liberation Sans", sans-serif; background: #e6e6e6; border-color: #c8c8c8; color: #222; }
.letters th { height: 11px; line-height: 10px; }
.letters svg { margin-left: 7px; }
.letters .sel { background: #d2d2d2; color: #217346; border-bottom-color: #217346; }
td div { display: flex; justify-content: space-between; overflow: hidden; }
td b { overflow: hidden; }
td button { flex: none; width: 9px; height: 9px; justify-content: center; background: #fff; border: 1px solid #c4c8cc; }
td .open { background: #d5dce6; }
.url { color: #1f4e79; }
.vscroll { width: 10px; display: flex; flex-direction: column; align-items: center; background: #dadada; border-left: 1px solid #c8c8c8; }
.arrow { flex: none; width: 8px; height: 8px; background: #fff; border: 1px solid #ccc; display: flex; align-items: center; justify-content: center; }
.vscroll .thumb { width: 8px; height: 8px; margin-top: 1px; background: #fff; border: 1px solid #ccc; }

.menu { position: absolute; left: 242px; top: 20px; width: 140px; background: #fff; border: 1px solid #c6c6c6; box-shadow: 1px 1px 2px #bbb; font-size: 6px; color: #333; }
.mi { display: flex; width: 100%; height: 13px; padding: 0 2px 0 14px; }
.mi.tall { height: 15px; padding-left: 5px; gap: 3px; }
.mi.plain svg { margin-left: auto; }
.mi:disabled { color: #b0b0b0; }
.menu hr { margin: 0 3px 0 17px; border: 0; border-top: 1px solid #e2e2e2; }
.msearch { display: flex; align-items: center; height: 10px; margin: 1px 3px 1px 14px; border: 1px solid #c0c0c0; }
.msearch input { flex: 1; }
::placeholder { color: #555; opacity: 1; }
.values { height: 88px; margin: 0 3px 0 14px; padding-left: 5px; border: 1px solid #e0e0e0; }
.values label { display: flex; align-items: center; height: 9px; gap: 1px; }
.values label::before { content: ""; width: 4px; border-top: 1px dotted #aaa; }
.values input { appearance: none; width: 6px; height: 6px; border: 1px solid #888; background: url("data:image/svg+xml,%3Csvg xmlns='http://www.w3.org/2000/svg' viewBox='0 0 4 4'%3E%3Cpath d='M.4 2l1 1.200L3.700.4' fill='none' stroke='%23111' stroke-width='1'/%3E%3C/svg%3E"); }
.actions { display: flex; justify-content: flex-end; gap: 5px; padding: 8px 3px 3px; }
.actions button { width: 37px; height: 12px; justify-content: center; background: #e1e1e1; border: 1px solid #c8c8c8; font-size: 5px; color: #111; }
.actions .ok { border-color: #0078d7; }
.grip { display: flex; justify-content: flex-end; height: 5px; border-top: 1px solid #e2e8ee; }

.sheets { flex: none; height: 13px; display: flex; align-items: flex-start; background: #e6e6e6; border-top: 1px solid #b8b8b8; border-bottom: 1px solid #cfcfcf; color: #555; line-height: 9px; }
.nav { width: 43px; padding-left: 11px; display: flex; gap: 9px; color: #aaa; }
.sheets > button { height: 11px; padding: 0 5px; border-right: 1px solid #bbb; }
.sheets .active { background: #fff; color: #217346; font-weight: 700; border-bottom: 1px solid #217346; padding: 0 4px; }
.sheets .add { border: 0; margin-left: 6px; }
.hscroll { width: 319px; display: flex; align-items: center; height: 11px; padding-right: 11px; }
.hscroll .arrow { margin-left: 1px; }
.track { flex: 1; height: 8px; background: #d4d4d4; display: flex; justify-content: flex-end; padding-right: 29px; }
.track .thumb { width: 9px; background: #fff; border: 1px solid #ccc; }

.status { flex: none; height: 12px; display: flex; align-items: center; gap: 3px; padding: 0 3px 0 4px; background: #f1f0ef; color: #666; }
.status button { width: 20px; height: 12px; justify-content: center; margin-right: -2px; }
.status input { appearance: none; width: 54px; height: 8px; background: linear-gradient(#aaa, #aaa) center / 100% 1px no-repeat; }
.status input::-webkit-slider-thumb { appearance: none; width: 3px; height: 7px; background: #666; }
.status span { line-height: 10px; }
.status .pct { font-size: 5px; margin-left: 4px; }

.taskbar { flex: none; height: 21px; display: flex; background: #1b2025; color: #fff; }
.start { width: 25px; justify-content: center; background: #14171a; }
.wsearch { width: 179px; display: flex; align-items: center; gap: 5px; padding-left: 6px; background: #f2f2f2; color: #333; font-size: 7px; }
.wsearch input { flex: 1; }
.apps { flex: 1; display: flex; }
.apps button { position: relative; flex: 1; justify-content: center; border-bottom: 2px solid transparent; }
.apps svg { width: 13px; height: 13px; }
.apps b { position: absolute; left: 50%; margin-left: -6px; width: 7px; text-align: center; font-size: 5px; line-height: 8px; }
.apps .run { border-image: linear-gradient(90deg, transparent 10%, #76b9ed 10% 90%, transparent 90%) 2; }
.apps .current { background: #474b4f; }
.tray { width: 133px; display: flex; align-items: center; gap: 3px; padding-left: 4px; font-size: 6px; text-align: center; white-space: nowrap; }
.lang { width: 15px; } .clock { width: 33px; }
.lang, .clock { line-height: 9px; }
.notif { position: relative; margin-left: 3px; }
.notif i { position: absolute; left: 5px; top: 3px; width: 8px; height: 8px; border-radius: 4px; border: 1px solid #aaa; background: #333; font-size: 5px; line-height: 6px; text-align: center; }
```
